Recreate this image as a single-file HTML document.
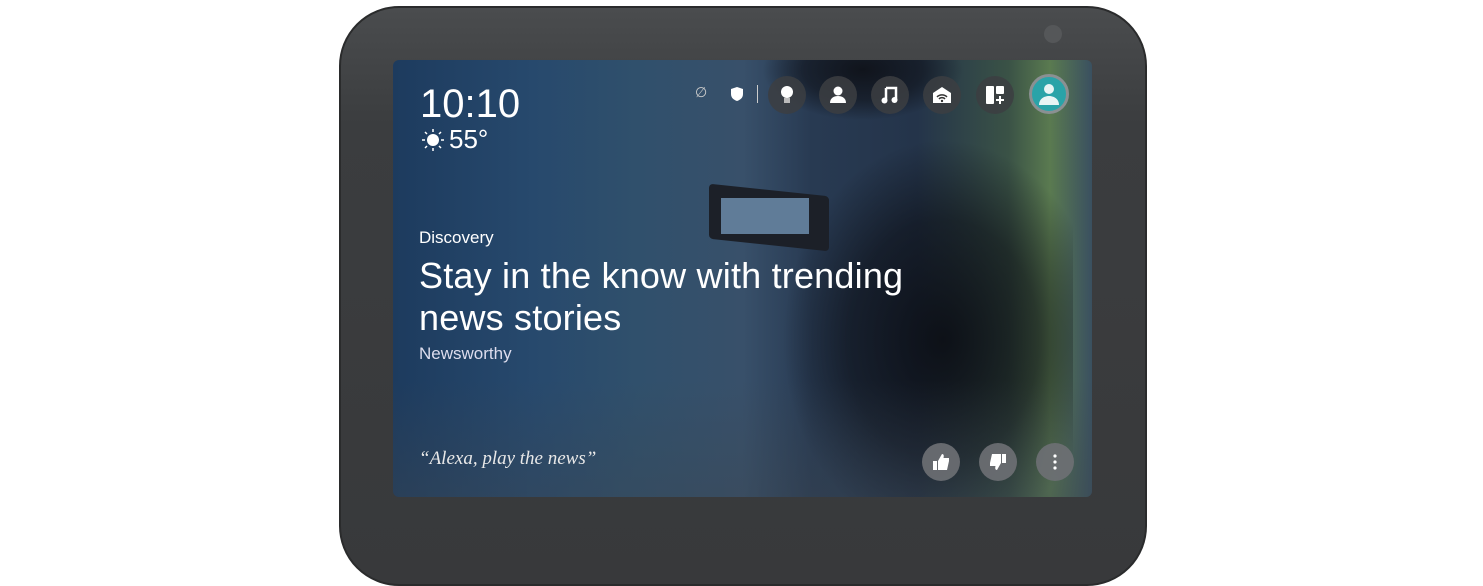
<!DOCTYPE html>
<html><head><style>
*{margin:0;padding:0;box-sizing:border-box}
body{width:1483px;height:552px;background:#fff;position:relative;overflow:hidden;font-family:"Liberation Sans",sans-serif}
.dev{position:absolute;left:339px;top:6px;width:808px;height:580px;border-radius:60px;background:linear-gradient(#4a4c4e,#3b3d3f 20%,#38393b);border:2px solid #2a2b2c}
.cam{position:absolute;left:1044px;top:25px;width:18px;height:18px;border-radius:50%;background:#555759}
.scr{position:absolute;left:393px;top:60px;width:699px;height:437px;border-radius:6px;overflow:hidden;
background:linear-gradient(90deg,#1d3b5e 0%,#27496d 20%,#30506c 35%,#38506a 50%,#283a52 60%,#24344a 75%,#3a5246 88%,#5a7a50 94%,#3a5060 100%)}
.dark{position:absolute;left:380px;top:60px;width:300px;height:377px;background:radial-gradient(ellipse 160px 200px at 170px 220px,rgba(10,12,18,.9),rgba(10,12,18,.55) 60%,transparent 100%)}
.bl1{position:absolute;left:0;top:320px;width:699px;height:117px;background:linear-gradient(transparent,rgba(60,70,80,.4))}
.t{position:absolute;color:#fff}
.ic{position:absolute;width:38px;height:38px;border-radius:50%;background:rgba(60,62,66,.85);top:16px}
.ic svg{position:absolute;left:9px;top:9px}
.bb{position:absolute;width:38px;height:38px;border-radius:50%;background:rgba(110,112,116,.9);top:383px}
.bb svg{position:absolute;left:9px;top:9px}
</style></head><body>
<div class="dev"></div><div class="cam"></div>
<div class="scr">
<div style="position:absolute;left:370px;top:-20px;width:200px;height:100px;background:radial-gradient(ellipse 100px 50px at 100px 30px,rgba(15,18,25,.95),rgba(15,18,25,.6) 60%,transparent)"></div>
<div class="dark"></div>
<div class="bl1"></div>
<div style="position:absolute;left:316px;top:130px;width:120px;height:55px;background:#1c2028;border-radius:4px;transform:skewY(6deg)"></div>
<div style="position:absolute;left:328px;top:138px;width:88px;height:36px;background:#7ea4c8;opacity:.7"></div>
<div class="t" style="left:27px;top:22px;font-size:40px">10:10</div>
<div class="t" style="left:56px;top:64px;font-size:26px">55°</div>
<svg style="position:absolute;left:28px;top:68px" width="24" height="24" viewBox="0 0 24 24"><circle cx="12" cy="12" r="6" fill="#fff"/><g stroke="#fff" stroke-width="1.5"><path d="M12 1v3M12 20v3M1 12h3M20 12h3M4 4l2 2M18 18l2 2M4 20l2-2M18 6l2-2"/></g></svg>
<div class="t" style="left:26px;top:168px;font-size:17px">Discovery</div>
<div class="t" style="left:26px;top:195px;font-size:36px;line-height:42px;letter-spacing:.2px">Stay in the know with trending<br>news stories</div>
<div class="t" style="left:26px;top:284px;font-size:17px;color:#dde">Newsworthy</div>
<div class="t" style="left:26px;top:388px;font-size:19px;font-style:italic;font-family:'Liberation Serif',serif;color:#e8e8e8">“Alexa, play the news”</div>
<div class="t" style="left:302px;top:24px;font-size:14px;color:#ccc">∅</div>
<svg style="position:absolute;left:338px;top:27px" width="12" height="14" viewBox="0 0 12 14"><path d="M6 0L12 2v5c0 4-3 6-6 7C3 13 0 11 0 7V2z" fill="#fff"/></svg>
<div style="position:absolute;left:364px;top:25px;width:1px;height:18px;background:#ccc"></div>
<div class="ic" style="left:375px"><svg width="20" height="20" viewBox="0 0 20 20"><circle cx="10" cy="7" r="6" fill="#fff"/><rect x="7" y="13" width="6" height="5" fill="#bbb"/></svg></div>
<div class="ic" style="left:426px"><svg width="20" height="20" viewBox="0 0 20 20"><circle cx="10" cy="6" r="4.5" fill="#fff"/><path d="M2 18c0-5 4-7 8-7s8 2 8 7z" fill="#fff"/></svg></div>
<div class="ic" style="left:478px"><svg width="20" height="20" viewBox="0 0 20 20"><path d="M6 3h10v12" stroke="#fff" stroke-width="2.5" fill="none"/><path d="M6 3v12" stroke="#fff" stroke-width="2.5"/><circle cx="4.5" cy="15.5" r="3" fill="#fff"/><circle cx="14.5" cy="15" r="3" fill="#fff"/></svg></div>
<div class="ic" style="left:530px"><svg width="20" height="20" viewBox="0 0 20 20"><path d="M10 2L19 8v10H1V8z" fill="#fff"/><path d="M5 12a7 7 0 0 1 10 0M7 14a4 4 0 0 1 6 0" stroke="#333" stroke-width="1.5" fill="none"/><circle cx="10" cy="16" r="1.2" fill="#333"/></svg></div>
<div class="ic" style="left:583px"><svg width="20" height="20" viewBox="0 0 20 20"><rect x="1" y="1" width="8" height="18" rx="1" fill="#fff"/><rect x="11" y="1" width="8" height="8" rx="1" fill="#fff"/><path d="M15 11v8M11 15h8" stroke="#fff" stroke-width="2"/></svg></div>
<div style="position:absolute;left:636px;top:14px;width:40px;height:40px;border-radius:50%;background:#2aa3a8;border:3px solid #8a9092"><svg style="position:absolute;left:6px;top:5px" width="22" height="24" viewBox="0 0 22 24"><circle cx="11" cy="7" r="5" fill="#e8f4f4"/><path d="M1 23c0-6 5-9 10-9s10 3 10 9z" fill="#e8f4f4"/></svg></div>
<div class="bb" style="left:529px"><svg width="20" height="20" viewBox="0 0 20 20"><path d="M2 9h4v9H2zM7 9l4-7c2 0 2 2 1.5 4H18v3l-2 9H7z" fill="#fff"/></svg></div>
<div class="bb" style="left:586px"><svg width="20" height="20" viewBox="0 0 20 20"><g transform="rotate(180 10 10)"><path d="M2 9h4v9H2zM7 9l4-7c2 0 2 2 1.5 4H18v3l-2 9H7z" fill="#fff"/></g></svg></div>
<div class="bb" style="left:643px"><svg width="20" height="20" viewBox="0 0 20 20"><circle cx="10" cy="4" r="1.6" fill="#fff"/><circle cx="10" cy="10" r="1.6" fill="#fff"/><circle cx="10" cy="16" r="1.6" fill="#fff"/></svg></div>
</div>
</body></html>
